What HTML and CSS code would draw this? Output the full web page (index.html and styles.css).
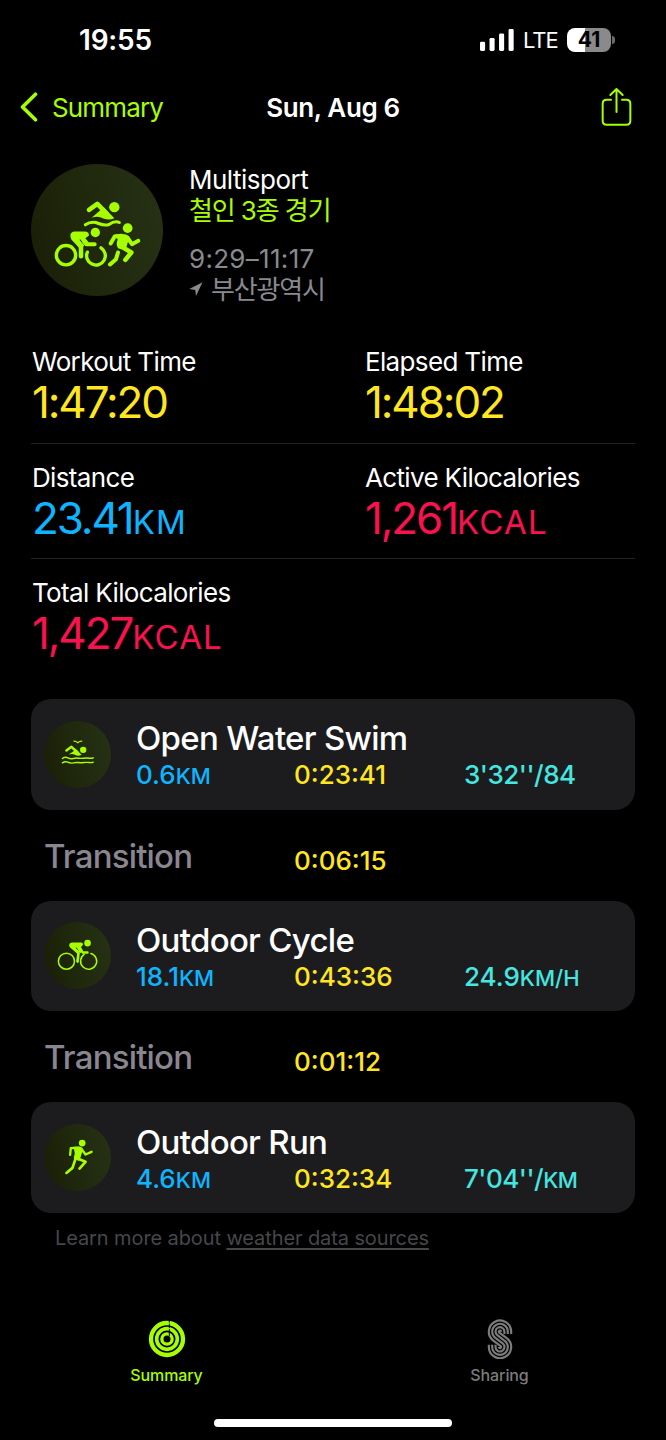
FILE: index.html
```html
<!DOCTYPE html>
<html lang="en">
    <head>
        <meta charset="utf-8" />
        <meta name="viewport" content="width=device-width, initial-scale=1" />
        <title>Multisport</title>
        <link rel="stylesheet" href="styles.css">
    </head>

    <body>
        <div class="status-bar">
            <div class="clock">19:55</div>
            <div class="status-right">
                <svg class="signal" viewBox="441 87 100 64" fill="#fff">
                    <rect x="441" y="124" width="15" height="27" rx="4" />
                    <rect x="469" y="113" width="15" height="38" rx="4" />
                    <rect x="497" y="100" width="15" height="51" rx="4" />
                    <rect x="525" y="87" width="15" height="64" rx="4" />
                </svg>
                <span class="network">LTE</span>
                <span class="battery">41</span>
                <span class="battery-tip"></span>
            </div>
        </div>

        <div class="nav">
            <a class="back">
                <svg class="chevron" viewBox="0 0 18 30" fill="none" stroke="#a6ff00" stroke-width="3.6" stroke-linecap="round" stroke-linejoin="round">
                    <path d="M15.5 2.2L2.5 15L15.5 27.8" />
                </svg>
                <span>Summary</span>
            </a>
            <div class="nav-title">Sun, Aug 6</div>
            <svg class="share" viewBox="801 260 93 120" fill="none" stroke="#a6ff00" stroke-width="6" stroke-linecap="round" stroke-linejoin="round">
                <path d="M831 298H818Q806 298 806 310V361Q806 373 818 373H877Q889 373 889 361V310Q889 298 877 298H864" />
                <path d="M847.5 335V267M829 284L847.5 266L866 284" />
            </svg>
        </div>

        <div class="workout">
            <svg class="workout-icon" viewBox="33 25.5 396 396">
                <defs>
                    <linearGradient id="disc" x1="0" y1="0.6" x2="1" y2="0.4">
                        <stop offset="0" stop-color="#1a2007" />
                        <stop offset="1" stop-color="#263114" />
                    </linearGradient>
                </defs>
                <circle cx="231" cy="223.5" r="198" fill="url(#disc)" />
                <g fill="#a6ff00">
                    <circle cx="283" cy="155" r="15.5" />
                    <path d="M239 166L215 187Q234 180 250 189Q268 196 283 188L252 156Z" />
                    <circle cx="226" cy="231" r="14" />
                    <path d="M151 242Q151 228 165 228H194Q207 228 207 240L196 248L206 260L192 268L182 252L178 253L193 270L182 282L154 252Z" />
                    <circle cx="323" cy="218" r="14.5" />
                    <path d="M286 236H316Q330 240 325 255L320 272L314 284L294 278Q287 266 293 252Z" />
                </g>
                <g fill="none" stroke="#a6ff00" stroke-width="13.5" stroke-linecap="round" stroke-linejoin="round">
                    <path d="M207 163L232 145L258 172" />
                    <path d="M196 208Q211 197 228 201C242 206 252 213 267 207C280 198 288 196 298 201" stroke-width="9" />
                    <circle cx="138" cy="299" r="29" stroke-width="10" />
                    <path d="M243 277A28 28 0 1 1 202 290" stroke-width="10" />
                    <path d="M162 243L183 274V302" />
                    <path d="M188 249L199 266H224" stroke-width="12" />
                    <path d="M305 241L284 243L272 264" stroke-width="12" />
                    <path d="M322 246L336 266L355 256" stroke-width="12" />
                    <path d="M306 274L334 291L316 313" />
                    <path d="M294 291L288 311L270 327" stroke-width="12" />
                </g>
            </svg>
            <div class="workout-info">
                <div class="workout-type">Multisport</div>
                <div class="workout-name">철인 3종 경기</div>
                <div class="workout-hours">9:29–11:17</div>
                <div class="workout-place">
                    <svg class="arrow" viewBox="0 0 14 14" fill="#8a898e"><path d="M13.5 0.3L7 14L6.2 8L0.3 7Z" /></svg>
                    <span>부산광역시</span>
                </div>
            </div>
        </div>

        <div class="stats">
            <div class="stat-row">
                <div class="stat">
                    <div class="label">Workout Time</div>
                    <div class="value yellow">1:47:20</div>
                </div>
                <div class="stat">
                    <div class="label">Elapsed Time</div>
                    <div class="value yellow">1:48:02</div>
                </div>
            </div>
            <div class="stat-row">
                <div class="stat">
                    <div class="label">Distance</div>
                    <div class="value blue">23.41<small>KM</small></div>
                </div>
                <div class="stat">
                    <div class="label">Active Kilocalories</div>
                    <div class="value pink">1,261<small>KCAL</small></div>
                </div>
            </div>
            <div class="stat-row">
                <div class="stat">
                    <div class="label">Total Kilocalories</div>
                    <div class="value pink">1,427<small>KCAL</small></div>
                </div>
            </div>
        </div>

        <div class="legs">
            <div class="card">
                <svg class="card-icon" viewBox="42 62 200 200">
                    <circle cx="142" cy="162" r="100" fill="url(#disc)" />
                    <g fill="#a6ff00">
                        <circle cx="159" cy="148" r="9.5" />
                        <path d="M130 152L116 162Q126 159 134 163Q144 168 154 163L138 146Z" />
                    </g>
                    <g fill="none" stroke="#a6ff00" stroke-width="4.2" stroke-linecap="round" stroke-linejoin="round">
                        <path d="M131 122Q139 122 143 127Q147 122 155 122" stroke-width="3.5" />
                        <path d="M109 150L124 139L142 156" stroke-width="7.5" />
                        <path d="M97 174Q105 168 113 172T129 174T145 173T161 173T177 173T189 172" />
                        <path d="M97 187Q105 181 113 185T129 187T145 186T161 186T177 186T189 185" />
                    </g>
                </svg>
                <div class="card-body">
                    <div class="card-title">Open Water Swim</div>
                    <div class="card-values">
                        <span class="blue">0.6<small>KM</small></span>
                        <span class="yellow">0:23:41</span>
                        <span class="teal pace">3'32''/84</span>
                    </div>
                </div>
            </div>
            <div class="transition">
                <span class="transition-title">Transition</span>
                <span class="transition-time yellow">0:06:15</span>
            </div>
            <div class="card">
                <svg class="card-icon" viewBox="42 67 200 200">
                    <circle cx="142" cy="167" r="100" fill="url(#disc)" />
                    <g fill="#a6ff00">
                        <circle cx="172" cy="130" r="10" />
                        <path d="M117 138Q117 128 127 128H152Q160 129 158 136L152 142L158 152L150 160L140 144L136 144L148 156L145 164L120 143Z" />
                    </g>
                    <g fill="none" stroke="#a6ff00" stroke-width="8" stroke-linecap="round" stroke-linejoin="round">
                        <circle cx="109" cy="184" r="24" stroke-width="4.5" />
                        <path d="M162 164A24 24 0 1 0 182 161" stroke-width="4.5" />
                        <path d="M124 139L145 160L142 185" />
                        <path d="M148 142L157 158H172" stroke-width="7" />
                    </g>
                </svg>
                <div class="card-body">
                    <div class="card-title">Outdoor Cycle</div>
                    <div class="card-values">
                        <span class="blue">18.1<small>KM</small></span>
                        <span class="yellow">0:43:36</span>
                        <span class="teal">24.9<small>KM/H</small></span>
                    </div>
                </div>
            </div>
            <div class="transition">
                <span class="transition-title">Transition</span>
                <span class="transition-time yellow">0:01:12</span>
            </div>
            <div class="card">
                <svg class="card-icon" viewBox="42 72 200 200">
                    <circle cx="142" cy="172" r="100" fill="url(#disc)" />
                    <g fill="#a6ff00">
                        <circle cx="156" cy="129" r="10" />
                        <path d="M130 140H150Q160 142 157 152L151 172L147 182L132 178Q130 170 134 160Z" />
                    </g>
                    <g fill="none" stroke="#a6ff00" stroke-width="8" stroke-linecap="round" stroke-linejoin="round">
                        <path d="M146 143L122 144L120 164" stroke-width="7" />
                        <path d="M155 148L166 163L184 155" stroke-width="7" />
                        <path d="M142 175L166 185L148 205" />
                        <path d="M136 176L127 203L109 218" />
                    </g>
                </svg>
                <div class="card-body">
                    <div class="card-title">Outdoor Run</div>
                    <div class="card-values">
                        <span class="blue">4.6<small>KM</small></span>
                        <span class="yellow">0:32:34</span>
                        <span class="teal pace">7'04''/<small>KM</small></span>
                    </div>
                </div>
            </div>
        </div>
        <div class="footnote">Learn more about <u>weather data sources</u></div>

        <div class="tabs">
            <div class="tab active">
                <svg viewBox="113 59 114 120" fill="none" stroke="#a6ff00">
                    <circle cx="170" cy="119" r="48" stroke-width="13" />
                    <circle cx="170" cy="119" r="31" stroke-width="11" />
                    <circle cx="170" cy="119" r="15.5" stroke-width="10" />
                    <path d="M177 62V80M177 83V96M177 98V110" stroke="#000" stroke-width="3" />
                    <path d="M172 74L180 70M172 90L180 86" stroke="#a6ff00" stroke-width="3" />
                </svg>
                <span>Summary</span>
            </div>
            <div class="tab">
                <svg viewBox="120 59 114 120" fill="none" stroke="#7c7c7c" stroke-width="6.5">
                    <path d="M210.5 104V97A33.5 33.5 0 1 0 156.9 123.8L179 140.4A3.3 3.3 0 1 1 173.7 143" />
                    <path d="M200.4 104V97A23.4 23.4 0 1 0 163 115.7L185 132.3A13.4 13.4 0 1 1 163.6 143V136" />
                    <path d="M190.4 104V97A13.4 13.4 0 1 0 169 107.7L191 124.3A23.4 23.4 0 1 1 153.6 143V136" />
                    <path d="M180.3 97A3.3 3.3 0 1 0 175 99.6L197.1 116.2A33.5 33.5 0 1 1 143.5 143V136" />
                </svg>
                <span>Sharing</span>
            </div>
        </div>
        <div class="home-bar"></div>
    </body>
</html>
```
FILE: styles.css
```css
* {
    box-sizing: border-box;
}
body {
    margin: 0;
    width: 666px;
    height: 1440px;
    overflow: hidden;
    background: #000;
    color: #fff;
    font-family: Inter, "Noto Sans CJK KR", sans-serif;
    font-size: 26px;
    white-space: nowrap;
}
svg {
    display: block;
    flex: none;
}
small {
    font-size: inherit;
}
.yellow {
    color: #ffe620;
}
.blue {
    color: #0fb4ff;
}
.pink {
    color: #fa114f;
}
.teal {
    color: #45e6e0;
}

.status-bar {
    display: flex;
    justify-content: space-between;
    align-items: center;
    height: 80px;
    padding: 0 51px 0 79px;
}
.clock {
    font-size: 28px;
    font-weight: 600;
    letter-spacing: -0.2px;
}
.status-right {
    display: flex;
    align-items: center;
}
.signal {
    width: 34px;
    height: 22px;
}
.network {
    margin-left: 9px;
    width: 44px;
    font-size: 22px;
    letter-spacing: -1px;
}
.battery {
    width: 44px;
    height: 24px;
    border-radius: 8px;
    background: linear-gradient(90deg, #fff 18px, #8a8a8a 18px);
    color: #000;
    font-size: 21px;
    font-weight: 700;
    line-height: 24px;
    text-align: center;
}
.battery-tip {
    width: 3px;
    height: 8px;
    margin-left: 1px;
    border-radius: 0 4px 4px 0;
    background: #6a6a6a;
}

.nav {
    display: grid;
    grid-template-columns: 1fr auto 1fr;
    align-items: center;
    height: 54px;
    padding: 0 34px 0 20px;
}
.back {
    display: flex;
    align-items: center;
    gap: 14px;
    color: #a6ff00;
    letter-spacing: -0.85px;
}
.chevron {
    width: 18px;
    height: 30px;
}
.nav-title {
    padding-left: 14px;
    font-weight: 600;
    letter-spacing: -0.4px;
}
.share {
    justify-self: end;
    width: 31px;
    height: 40px;
}

.workout {
    display: flex;
    height: 193px;
    padding: 29.5px 31px 0;
}
.workout-icon {
    width: 132px;
    height: 132px;
}
.workout-info {
    margin-left: 26px;
    line-height: 31px;
}
.workout-type {
    letter-spacing: -0.5px;
}
.workout-name {
    color: #a6ff00;
    letter-spacing: -1.1px;
}
.workout-hours {
    margin-top: 17px;
    letter-spacing: 0.3px;
}
.workout-hours,
.workout-place {
    color: #8a898e;
}
.workout-place {
    display: flex;
    align-items: center;
    gap: 8px;
    letter-spacing: -1.2px;
}
.arrow {
    width: 14px;
    height: 14px;
}

.stats {
    margin: 0 31px;
    height: 372px;
}
.stat-row {
    display: grid;
    grid-template-columns: 333px 1fr;
    height: 115.6px;
    padding: 19px 0 0 1px;
}
.stat-row + .stat-row {
    padding-top: 18px;
    border-top: 1px solid #222224;
}
.label {
    line-height: 32px;
    letter-spacing: -0.65px;
}
.value {
    margin-top: 2px;
    font-size: 44px;
    line-height: 44px;
    letter-spacing: -2.1px;
}
.value small {
    font-size: 33px;
    letter-spacing: 1.2px;
}

.legs {
    margin: 0 31px;
}
.card {
    display: flex;
    align-items: center;
    height: 110.5px;
    padding-left: 13px;
    border-radius: 20px;
    background: #1c1c1e;
}
.card-icon {
    width: 67px;
    height: 67px;
}
.card-body {
    flex: 1;
    margin-left: 25px;
    padding-top: 3px;
}
.card-title {
    font-size: 33px;
    font-weight: 500;
    line-height: 40px;
    letter-spacing: -0.7px;
}
.card-values {
    display: grid;
    grid-template-columns: 158px 170px 1fr;
    font-weight: 450;
    line-height: 33px;
}
.card-values small {
    font-size: 22px;
}
.pace {
    letter-spacing: -0.5px;
}
.transition {
    display: grid;
    grid-template-columns: 249px 1fr;
    height: 91.2px;
    padding: 26px 0 0 14px;
}
.transition-title {
    margin-left: -1px;
    font-size: 33px;
    font-weight: 450;
    line-height: 40px;
    letter-spacing: -0.8px;
    color: #8a8690;
}
.transition-time {
    font-weight: 450;
    line-height: 49px;
}
.footnote {
    margin: 12px 55px 0;
    font-size: 20px;
    line-height: 26px;
    letter-spacing: -0.1px;
    color: #47474a;
}
.footnote u {
    text-underline-offset: 3px;
}

.tabs {
    display: grid;
    grid-template-columns: 1fr 1fr;
    margin-top: 68px;
}
.tab {
    display: flex;
    flex-direction: column;
    align-items: center;
    font-size: 16px;
    font-weight: 550;
    line-height: 20px;
    letter-spacing: -0.1px;
    color: #7c7c7c;
}
.tab svg {
    width: 38px;
    height: 40px;
    margin-bottom: 6px;
}
.tab.active {
    color: #a6ff00;
}
.home-bar {
    width: 238px;
    height: 8px;
    margin: 34px auto 0;
    border-radius: 4px;
    background: #fff;
}
```
